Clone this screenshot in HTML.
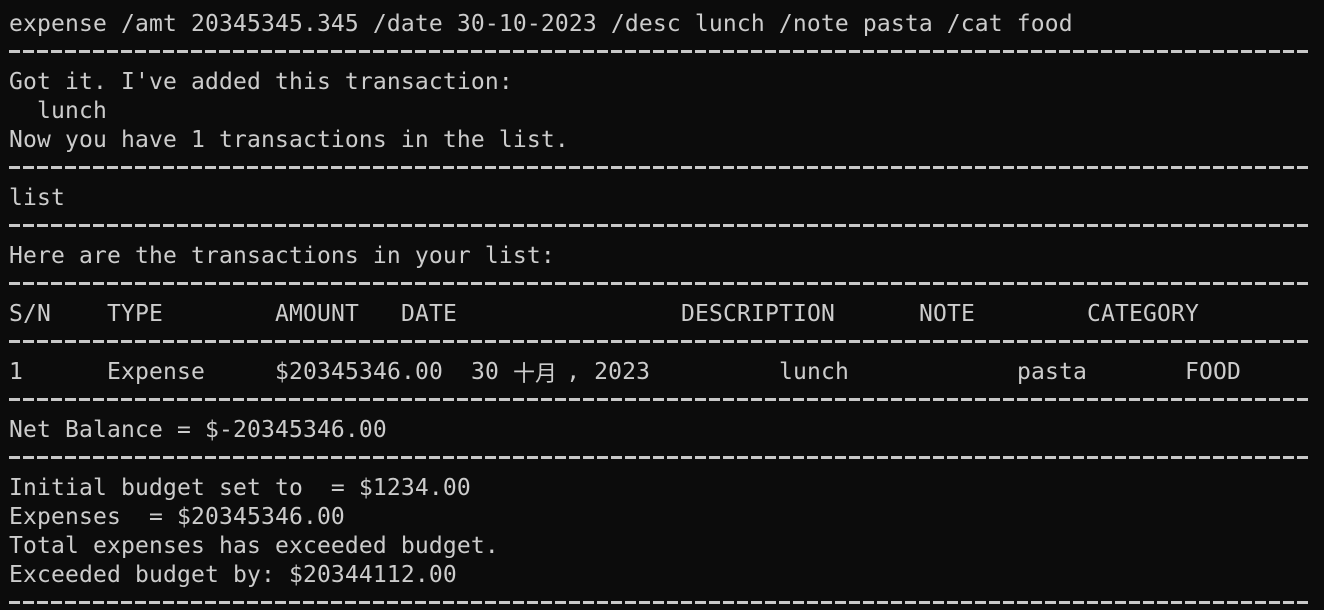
<!DOCTYPE html>
<html><head><meta charset="utf-8"><style>
html,body{margin:0;padding:0;background:#0c0c0c;width:1324px;height:610px;overflow:hidden}
.l{position:absolute;left:9px;height:29px;line-height:29px;white-space:pre;color:#cccccc;font-family:"DejaVu Sans Mono","Liberation Mono","Noto Sans CJK SC",monospace;font-size:23px;letter-spacing:0.15px}
.c{position:absolute;top:0;white-space:pre}
.cjk{font-family:"Noto Sans CJK SC",sans-serif;letter-spacing:0;font-size:22px}
.d{position:absolute;left:9px;width:1302px;height:3px;background:repeating-linear-gradient(90deg,#c8c8c8 0 11px,#0c0c0c 11px 14px)}
</style></head><body>
<div id="t"></div>
<script>
const D=null;
const lines=[
"expense /amt 20345345.345 /date 30-10-2023 /desc lunch /note pasta /cat food",D,
"Got it. I've added this transaction:","  lunch","Now you have 1 transactions in the list.",D,
"list",D,"Here are the transactions in your list:",D,
[[0,"S/N"],[7,"TYPE"],[19,"AMOUNT"],[28,"DATE"],[48,"DESCRIPTION"],[65,"NOTE"],[77,"CATEGORY"]],D,
[[0,"1"],[7,"Expense"],[19,"$20345346.00"],[33,"30"],[36,"十月",1],[39.8,", 2023"],[55,"lunch"],[72,"pasta"],[84,"FOOD"]],D,
"Net Balance = $-20345346.00",D,
"Initial budget set to  = $1234.00","Expenses  = $20345346.00","Total expenses has exceeded budget.","Exceeded budget by: $20344112.00",D];
let h='';
lines.forEach((s,i)=>{
 const top=10+i*29;
 if(s===null) h+=`<div class="d" style="top:${8+i*29+13}px"></div>`;
 else if(typeof s==='string') h+=`<div class="l" style="top:${top}px">${s.replace(/&/g,'&amp;').replace(/</g,'&lt;')}</div>`;
 else{h+=`<div class="l" style="top:${top}px;width:1310px">`;s.forEach(p=>{h+=`<span class="c${p[2]?' cjk':''}" style="left:${p[0]*14}px">${p[1]}</span>`});h+='</div>';}
});
document.getElementById('t').innerHTML=h;
</script>
</body></html>
